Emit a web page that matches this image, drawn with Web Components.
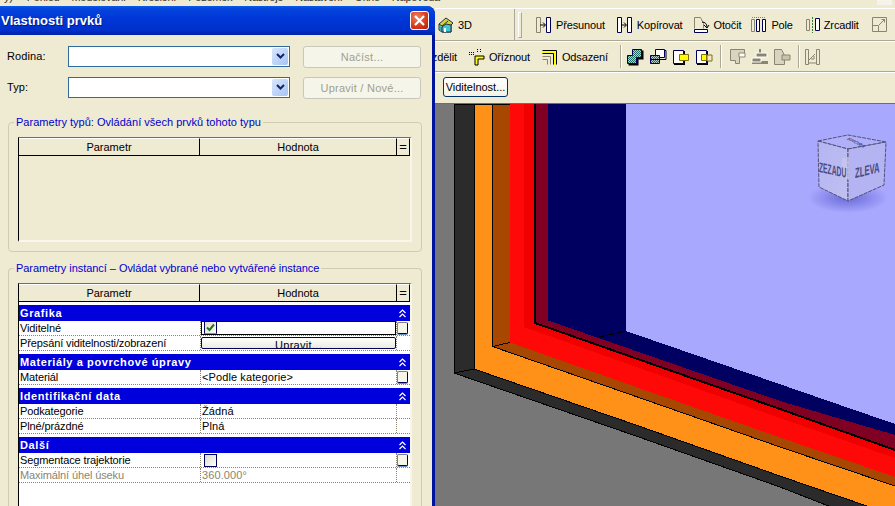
<!DOCTYPE html>
<html lang="cs">
<head>
<meta charset="utf-8">
<title>Vlastnosti prvků</title>
<style>
html, body { margin: 0; height: 506px; overflow: hidden; background: #efead2; }
body { font: 11px "Liberation Sans", Arial, sans-serif; color: #000; }
</style>
</head>
<body>
<revit-app>
  <app-menu slot="menu"></app-menu>
  <props-dialog slot="dialog" heading="Vlastnosti prvků">
    <form-row label="Rodina:" action="Načíst..."></form-row>
    <form-row label="Typ:" action="Upravit / Nové..."></form-row>
    <group-box heading="Parametry typů: Ovládání všech prvků tohoto typu" kind="types"><prop-table empty></prop-table></group-box>
    <group-box heading="Parametry instancí – Ovládat vybrané nebo vytvářené instance" kind="instances">
      <prop-table>
        <prop-section heading="Grafika"></prop-section>
        <prop-row name="Viditelné" control="checked" side></prop-row>
        <prop-row name="Přepsání viditelnosti/zobrazení" control="button"></prop-row>
        <prop-section heading="Materiály a povrchové úpravy"></prop-section>
        <prop-row name="Materiál" value="<Podle kategorie>" side></prop-row>
        <prop-section heading="Identifikační data"></prop-section>
        <prop-row name="Podkategorie" value="Žádná"></prop-row>
        <prop-row name="Plné/prázdné" value="Plná"></prop-row>
        <prop-section heading="Další"></prop-section>
        <prop-row name="Segmentace trajektorie" control="check" side></prop-row>
        <prop-row name="Maximální úhel úseku" value="360.000°" muted></prop-row>
      </prop-table>
    </group-box>
  </props-dialog>
  <tool-bars slot="bars"></tool-bars>
  <view-port slot="view"><view-cube></view-cube></view-port>
</revit-app>

<script>
const TAN = "#8a8570";
const NAVY = "#00005a";
const dither = `<defs><pattern id="d" width="2" height="2" patternUnits="userSpaceOnUse"><rect width="2" height="2" fill="#b8d0c8"/><rect width="1" height="1" fill="#1f6a60"/><rect x="1" y="1" width="1" height="1" fill="#1f6a60"/></pattern></defs>`;
const icons = {
  house: `<path d="M1 7 8 1l7 5-2 2v7H4l-3-2z" fill="#d8d040" stroke="#203040"/><path d="M1 7l3 2 6-5" fill="none" stroke="#203040"/><path d="M2 9l2 1v5l-2-2z" fill="#30b0c0"/><path d="M4 10l4-3 5 1v7H4z" fill="#40c8d0" stroke="#203040"/><path d="M6 11h2v4H6z" fill="#fff"/>`,
  move: `<path d="M.5.5h4v15h-4z" fill="none" stroke="${TAN}"/><path d="M10.500.500h4v15h-4z" fill="#fff" stroke="${NAVY}"/><path d="M4 8h5M7 5.500 9.500 8 7 10.500" fill="none" stroke="#000"/>`,
  copy: `<path d="M.5.500h4v15h-4zM10.500.500h4v15h-4z" fill="#fff" stroke="${NAVY}"/><path d="M4 8h5M7 5.500 9.500 8 7 10.500" fill="none" stroke="#000"/>`,
  rotate: `<path d="M.5 11.500V.5h6l3 6v5" fill="none" stroke="${TAN}"/><path d="M8 5c3 0 5 2 5 5M10 8l3 3 2-3" fill="none" stroke="#000"/><path d="M.5 12.500h13v3H.5z" fill="#fff" stroke="${NAVY}"/>`,
  array: `<path d="M.5 2.500h3v12h-3z" fill="none" stroke="${TAN}"/><path d="M5.500 2.500h3v12h-3zM11.500 2.500h3v12h-3z" fill="#fff" stroke="${NAVY}"/><path d="M1 .5h13" stroke="${TAN}" stroke-dasharray="1 1"/>`,
  mirror: `<path d="M.5 2.500h3v11h-3z" fill="none" stroke="${TAN}"/><path d="M6.500 0v16" stroke="#3a7a30" stroke-dasharray="2 1"/><path d="M9.500 1.500h4v12h-4z" fill="#fff" stroke="${NAVY}"/>`,
  resize: `<path d="M.5.500h14v14H.5zM.5 8.500h6v6M7 8l6-6M9.500 2.500h3v3" fill="none" stroke="${TAN}"/>`,
  trim: `<path d="M0 5.500h6M0 3.500h6M8.500 0v4M11.500 0v4" stroke="#000" stroke-dasharray="1 1"/><path d="M6 7h9v3H9v6H6z" fill="#ffff00" stroke="#000"/>`,
  offset: `<path d="M.5 1.500h14v14M.5 4.500h11v11" fill="none" stroke="#000"/><path d="M0 3h13v13" fill="none" stroke="#ffff00" stroke-width="2"/><path d="M.5 7.500h8v8M.5 10.500h5v5" fill="none" stroke="${TAN}"/>`,
  joinA: `${dither}<path d="M6 1h10v9h-5v6H1V7h5z" fill="#000" transform="translate(.5 .5)"/><path d="M5.500.5h9v8h-5v6h-9v-8h5z" fill="url(#d)" stroke="${NAVY}"/>`,
  joinB: `${dither}<path d="M.5 6.500h9v8h-9z" fill="url(#d)" stroke="${NAVY}"/><path d="M6 1h10v9H1" fill="none" stroke="#000" transform="translate(0 .5)"/><path d="M5.500.5h9v8h-5v-2h-4z" fill="#fff" stroke="${NAVY}"/>`,
  cutA: `<path d="M1 2h11v14H1z" fill="#000"/><path d="M.5 1.500h10v13H.5z" fill="#fff" stroke="${NAVY}"/><path d="M6.500 5.500h9v6h-9z" fill="#ffff00" stroke="#807000"/>`,
  cutB: `<path d="M1 2h11v14H1z" fill="#000"/><path d="M.5 1.500h10v13H.5z" fill="#fff" stroke="${NAVY}"/><path d="M11 6h5v6h-5z" fill="#efead2" stroke="#807000"/><path d="M5.500 5.500h5v6h-5z" fill="#ffff00" stroke="#807000"/>`,
  greyA: `<path d="M.5.500h14v6h-5v8h-4v-3h-5z" fill="#d8d4c0" stroke="${TAN}"/><path d="M9 4h6v4H9z" fill="#fff" stroke="${TAN}"/>`,
  greyB: `<path d="M7 0h2v5H7zM0 12h16v3H0z" fill="${TAN}"/><path d="M4 4h11v4H4zM0 9h9v4H0z" fill="${TAN}" stroke="#fff"/>`,
  greyC: `<path d="M.5.500h7l3 6v9h-10z" fill="#d8d4c0" stroke="${TAN}"/><path d="M8 6h8v5H8z" fill="#c8c4b0" stroke="${TAN}"/>`,
  greyD: `<path d="M.5.500h3v15h-3zM11.500.500h3v15h-3z" fill="none" stroke="${TAN}"/><path d="M4 11l6-6M6 10h3v-3M4 14h7" fill="none" stroke="${TAN}"/>`
};

const esc = s => s.replace(/&/g, "&amp;").replace(/</g, "&lt;");

class RevitApp extends HTMLElement {
  constructor() {
    super();
    this.attachShadow({ mode: "open" });
    this.shadowRoot.innerHTML = `
    <style>
      :host { display: flex; flex-direction: column; width: 895px; height: 506px; overflow: hidden; }
      .work { display: flex; flex: 1; min-height: 0; }
      .right { flex: 1; min-width: 0; display: flex; flex-direction: column; }
      ::slotted([slot="view"]) { flex: 1; }
    </style>
    <slot name="menu"></slot>
    <div class="work">
      <slot name="dialog"></slot>
      <div class="right"><slot name="bars"></slot><slot name="view"></slot></div>
    </div>`;
  }
}

class AppMenu extends HTMLElement {
  constructor() {
    super();
    this.attachShadow({ mode: "open" });
    const items = ["Pohled", "Modelování", "Kreslení", "Pozemek", "Nástroje", "Nastavení", "Okno", "Nápověda"];
    this.shadowRoot.innerHTML = `
    <style>
      :host { display: flex; justify-content: space-between; height: 6px; overflow: hidden; }
      nav { display: flex; gap: 12px; margin: -9px 0 0 4px; line-height: 13px; color: #333; white-space: nowrap; letter-spacing: -.25px; }
      nav span:first-child { margin-right: 2px; }
      i { width: 15px; height: 5px; margin-right: 3px; background: #f6f4ea; }
    </style>
    <nav><span>y)</span>${items.map(i => `<span>${i}</span>`).join("")}</nav><i></i>`;
  }
}

class PropsDialog extends HTMLElement {
  constructor() {
    super();
    this.attachShadow({ mode: "open" });
    this.shadowRoot.innerHTML = `
    <style>
      :host { display: block; flex: none; width: 435px; height: 500px; box-sizing: border-box; position: relative; z-index: 2; overflow: hidden;
        border-radius: 0 8px 0 0; background: #00139c; }
      .title { height: 29px; display: flex; align-items: center; justify-content: space-between; padding: 0 6px 0 1px;
        background: linear-gradient(#0a5ae8 0, #0444dc 3px, #0037d8 12px, #0030cc 24px, #0022a8 29px); }
      .title b { color: #fff; font: bold 13px "Liberation Sans", Arial, sans-serif; text-shadow: 1px 1px 0 #001a80; }
      .close { width: 19px; height: 19px; box-sizing: border-box; border: 1px solid #fff; border-radius: 3px;
        background: radial-gradient(circle at 35% 30%, #f08060, #d83818 60%, #b02008); display: flex; }
      .close svg { margin: auto; }
      .body { height: 471px; margin-right: 3px; background: #efead2; overflow: hidden; padding-top: 11px; box-sizing: border-box; }
    </style>
    <div class="title">
      <b>${this.getAttribute("heading")}</b>
      <span class="close"><svg width="13" height="13" viewBox="0 0 13 13"><path d="M2 2l9 9M11 2l-9 9" stroke="#fff" stroke-width="2.200"/></svg></span>
    </div>
    <div class="body"><slot></slot></div>`;
  }
}

class FormRow extends HTMLElement {
  constructor() {
    super();
    this.attachShadow({ mode: "open" });
    this.shadowRoot.innerHTML = `
    <style>
      :host { display: grid; grid-template-columns: 61px 222px 118px; height: 31px; padding-left: 7px; font-size: 11px; letter-spacing: .1px; }
      label { line-height: 21px; }
      .combo { width: 222px; height: 21px; box-sizing: border-box; border: 1px solid #2f6a9c; background: #fff; display: flex; justify-content: flex-end; padding: 1px; }
      .arrow { width: 16px; background: linear-gradient(135deg, #d8e6fc, #a8c4f4); border-radius: 2px; display: flex; }
      .arrow svg { margin: auto; }
      .btn { margin-left: 13px; width: 118px; height: 22px; box-sizing: border-box; border: 1px solid #c9c7ba; border-radius: 3px; background: #f6f5ea; color: #a19f8e;
        text-align: center; line-height: 20px; letter-spacing: .25px; }
    </style>
    <label>${this.getAttribute("label")}</label>
    <div class="combo"><span class="arrow"><svg width="9" height="7" viewBox="0 0 9 7"><path d="M1 1l3.500 3.500L8 1" fill="none" stroke="#12246c" stroke-width="2"/></svg></span></div>
    <div class="btn">${this.getAttribute("action")}</div>`;
  }
}

class GroupBox extends HTMLElement {
  constructor() {
    super();
    this.attachShadow({ mode: "open" });
    this.shadowRoot.innerHTML = `
    <style>
      :host { display: block; margin: 0 10px 0 8px; position: relative; box-sizing: border-box; border: 1px solid #d0ccb4; border-radius: 4px; padding: 14px 9px 0; }
      :host([kind="types"]) { margin-top: 14px; height: 130px; }
      :host([kind="instances"]) { margin-top: 16px; height: 260px; border-bottom: 0; border-radius: 4px 4px 0 0; padding-top: 14px; }
      .legend { position: absolute; left: 5px; top: -7px; padding: 0 2px; background: #efead2; color: #0000d0; line-height: 13px; white-space: nowrap; letter-spacing: var(--ls, 0); }
      :host([kind="types"]) .legend { --ls: .02px; }
      :host([kind="instances"]) .legend { --ls: -.05px; }
    </style>
    <span class="legend">${this.getAttribute("heading")}</span>
    <slot></slot>`;
  }
}

class PropTable extends HTMLElement {
  constructor() {
    super();
    this.attachShadow({ mode: "open" });
    this.shadowRoot.innerHTML = `
    <style>
      :host { display: block; width: 394px; height: 105px; box-sizing: border-box; background: #fff; border-top: 1px solid #716f64; border-left: 1px solid #000; border-right: 2px solid #f8f6ea; }
      :host([empty]) { background: #efead2; border-bottom: 2px solid #f8f6ea; }
      :host(:not([empty])) { height: 240px; }
      .head { display: grid; grid-template-columns: 181px 197px 13px; height: 18px; box-sizing: border-box; border-bottom: 1px solid #000; background: #efead2; }
      .head span { text-align: center; line-height: 17px; border-right: 1px solid #000; border-top: 1px solid #fff; }
      .head span:last-child { width: 12px; font-size: 13px; line-height: 15px; }
    </style>
    <div class="head"><span>Parametr</span><span>Hodnota</span><span>=</span></div>
    <slot></slot>`;
  }
}

class PropSection extends HTMLElement {
  constructor() {
    super();
    this.attachShadow({ mode: "open" });
    this.shadowRoot.innerHTML = `
    <style>
      :host { display: flex; justify-content: space-between; align-items: center; height: 16px; margin-top: 3px; width: 391px; padding: 0 4px 0 1px; box-sizing: border-box; background: #0000dc; color: #fff; }
      b { font: bold 11px "Liberation Sans", Arial, sans-serif; letter-spacing: .6px; }
    </style>
    <b>${this.getAttribute("heading")}</b>
    <svg width="7" height="9" viewBox="0 0 7 9"><path d="M.5 4 3.500 1l3 3M.5 8l3-3 3 3" fill="none" stroke="#fff" stroke-width="1.200"/></svg>`;
  }
}

class PropRow extends HTMLElement {
  constructor() {
    super();
    this.attachShadow({ mode: "open" });
    const value = esc(this.getAttribute("value") || "");
    const control = this.getAttribute("control");
    let cell = `<span class="val">${value}</span>`;
    if (control === "checked") {
      cell = `<div class="field"><span class="check"><svg width="9" height="9" viewBox="0 0 9 9"><path d="M1 4.500 3.500 7 8 1.500" fill="none" stroke="#1a7a1a" stroke-width="2"/></svg></span></div>`;
    } else if (control === "check") {
      cell = `<span class="check solo"></span>`;
    } else if (control === "button") {
      cell = `<div class="upravit"><span>Upravit...</span></div>`;
    }
    this.shadowRoot.innerHTML = `
    <style>
      :host { display: grid; grid-template-columns: 181px 197px 13px; height: 15px; box-sizing: border-box; width: 391px; border-bottom: 1px dotted #8a8570; overflow: hidden; letter-spacing: -.12px; }
      :host([muted]) { color: #8a8570; }
      .name { padding-left: 1px; line-height: 14px; white-space: nowrap; }
      .cell { border-left: 1px dotted #8a8570; border-right: 1px dotted #8a8570; line-height: 14px; position: relative; }
      .val { padding-left: 1px; letter-spacing: .1px; }
      .field { height: 14px; box-sizing: border-box; border: 1px solid #000; padding-left: 2px; }
      .check { display: flex; align-items: center; justify-content: center; width: 13px; height: 13px; box-sizing: border-box; border: 1px solid #00005a; background: linear-gradient(135deg, #dcd8c8, #fff); border-bottom-color: #e87a10; margin-top: -1px; }
      .solo { margin: 1px 0 0 3px; border-bottom-color: #00005a; }
      .upravit { height: 12px; margin: 1px 0 0 0; box-sizing: border-box; border: 1px solid #00005a; border-radius: 2px; background: linear-gradient(#fff, #ecebe0); text-align: center; line-height: 14px; letter-spacing: .3px; overflow: hidden; }
      .side { height: 12px; width: 11px; margin-top: 1px; box-sizing: border-box; border: 1px solid #00005a; border-left-color: #808080; border-top-color: #808080; border-radius: 2px; background: #f6f5ea; box-shadow: 0 1px 0 #6a90c8; }
    </style>
    <span class="name">${this.getAttribute("name")}</span>
    <div class="cell">${cell}</div>
    ${this.hasAttribute("side") ? '<span class="side"></span>' : "<span></span>"}`;
  }
}

class ToolButton extends HTMLElement {
  constructor() {
    super();
    this.attachShadow({ mode: "open" });
    const label = this.getAttribute("label");
    this.shadowRoot.innerHTML = `
    <style>
      :host { display: inline-flex; align-items: center; gap: var(--gap, 4px); flex: none; white-space: nowrap; letter-spacing: -.15px; }
      svg { display: block; overflow: visible; }
    </style>
    <svg width="16" height="16" viewBox="0 0 16 16">${icons[this.getAttribute("icon")]}</svg>
    ${label ? `<span>${label}</span>` : ""}`;
  }
}

class ToolBars extends HTMLElement {
  constructor() {
    super();
    this.attachShadow({ mode: "open" });
    this.shadowRoot.innerHTML = `
    <style>
      :host { display: block; height: 98px; overflow: hidden; background: #efead2; }
      .cap { height: 2px; border-bottom: 1px solid #fff; }
      .row { display: flex; align-items: center; box-sizing: border-box; white-space: nowrap; }
      .one { height: 32px; border-bottom: 1px solid #aca899; box-shadow: 0 1px 0 #fff; }
      .two { height: 30px; border-bottom: 1px solid #aca899; box-shadow: 0 1px 0 #fff; margin-top: 1px; }
      .three { height: 32px; padding: 0 0 2px 8px; border-bottom: 1px solid #716f64; }
      .sep { flex: none; width: 1px; height: 23px; background: #aca899; border-right: 1px solid #fff; }
      .v3d { display: flex; align-items: center; height: 100%; width: 80px; box-sizing: border-box; padding-left: 3px; border-right: 1px solid #aca899; flex: none; }
      .grip { flex: none; width: 2px; height: 24px; border: 1px solid #aca899; border-left-color: #fff; border-top-color: #fff; margin: 0 14px 0 3px; }
      .vis { height: 20px; width: 65px; box-sizing: border-box; border: 1px solid #00306a; border-radius: 3px; background: linear-gradient(#fff, #f4f2e6); text-align: center; line-height: 18px; }
      .m { margin-left: var(--m); }
    </style>
    <div class="cap"></div>
    <div class="row one">
      <div class="v3d"><tool-button icon="house" label="3D"></tool-button></div>
      <span class="grip"></span>
      <tool-button icon="move" label="Přesunout"></tool-button>
      <tool-button class="m" style="--m:12px" icon="copy" label="Kopírovat"></tool-button>
      <tool-button class="m" style="--m:11px" icon="rotate" label="Otočit"></tool-button>
      <tool-button class="m" style="--m:10px" icon="array" label="Pole"></tool-button>
      <tool-button class="m" style="--m:13px;--gap:2px" icon="mirror" label="Zrcadlit"></tool-button>
      <tool-button class="m" style="--m:13px" icon="resize"></tool-button>
    </div>
    <div class="row two">
      <span style="margin-left:-17px;letter-spacing:-.1px">Rozdělit</span>
      <tool-button class="m" style="--m:12px" icon="trim" label="Oříznout"></tool-button>
      <tool-button class="m" style="--m:12px" icon="offset" label="Odsazení"></tool-button>
      <span class="sep m" style="--m:12px"></span>
      <tool-button class="m" style="--m:5px" icon="joinA"></tool-button>
      <tool-button class="m" style="--m:7px" icon="joinB"></tool-button>
      <tool-button class="m" style="--m:7px" icon="cutA"></tool-button>
      <tool-button class="m" style="--m:7px" icon="cutB"></tool-button>
      <span class="sep m" style="--m:8px"></span>
      <tool-button class="m" style="--m:8px" icon="greyA"></tool-button>
      <tool-button class="m" style="--m:6px" icon="greyB"></tool-button>
      <tool-button class="m" style="--m:6px" icon="greyC"></tool-button>
      <span class="sep m" style="--m:8px"></span>
      <tool-button class="m" style="--m:5px" icon="greyD"></tool-button>
    </div>
    <div class="row three"><div class="vis">Viditelnost...</div></div>`;
  }
}

class ViewPort extends HTMLElement {
  constructor() {
    super();
    this.attachShadow({ mode: "open" });
    // souřadnice ve viewBoxu odpovídají pixelům okna
    this.shadowRoot.innerHTML = `
    <style>
      :host { display: block; position: relative; overflow: hidden; background: #777; }
      svg { display: block; }
    </style>
    <svg width="460" height="402" viewBox="435 104 460 402" shape-rendering="crispEdges">
      <path d="M454 104H895V532L780 487 636 436 454 373Z" fill="#2b2b2b" stroke="#000"/>
      <path d="M474 104H895V516L867 506 780 476 636 425 474 369Z" fill="#ff9018" stroke="#000"/>
      <path d="M492.500 104H895V486L780 447 636 396.500 492.500 346.500Z" fill="#a84800" stroke="#000"/>
      <path d="M510 104H895V477L780 437.500 636 387 510 342.500Z" fill="#ff0808"/>
      <path d="M524 104H895V458L780 418 524 327Z" fill="#f00000"/>
      <path d="M536 104H895V450L780 410 536 323Z" fill="#800024"/>
      <path d="M535 104V323L780 409 895 450" fill="none" stroke="#000" stroke-width="2"/>
      <path d="M548 104H895V435L780 401 548 320.500Z" fill="#000060"/>
      <path d="M626 104H895V424L626 331Z" fill="#a8a8ff"/>
      <path d="M454 373 474 369M492.500 346.500 510 342.500M599 337 626 331" fill="none" stroke="#000"/>
    </svg>
    <slot></slot>`;
  }
}

class ViewCube extends HTMLElement {
  constructor() {
    super();
    this.attachShadow({ mode: "open" });
    this.shadowRoot.innerHTML = `
    <style>
      :host { display: block; position: absolute; right: 0; top: 26px; width: 90px; height: 90px; }
      svg { display: block; }
      text { font-family: "Liberation Sans", Arial, sans-serif; font-weight: bold; fill: #4a4a80; }
    </style>
    <svg width="90" height="90" viewBox="805 130 90 90">
      <defs>
        <radialGradient id="shade"><stop offset="0" stop-color="#6a6ad8"/><stop offset="1" stop-color="#a8a8ff"/></radialGradient>
        <linearGradient id="left" x1="0" y1="0" x2="1" y2="1"><stop offset="0" stop-color="#b4b4f4"/><stop offset="1" stop-color="#c0c0f0"/></linearGradient>
      </defs>
      <ellipse cx="848" cy="198" rx="40" ry="15" fill="url(#shade)"/>
      <path d="M818 141 848 135 886 142 848 149Z" fill="#b0b0f8" stroke="#505078" stroke-dasharray="4 1"/>
      <path d="M818 141 848 149 848 201 819 187Z" fill="url(#left)" stroke="#505078" stroke-dasharray="4 1"/>
      <path d="M848 149 886 142 884 185 848 201Z" fill="#b4b4f2" stroke="#505078" stroke-dasharray="4 1"/>
      <path d="M842 158h7v22l-7-3z" fill="#c8c8ee" opacity=".7"/>
      <text transform="matrix(.48 .1 0 1 819 172)" font-size="14">ZEZADU</text>
      <text transform="matrix(.55 -.13 0 1 855 178)" font-size="14">ZLEVA</text>
      <text transform="matrix(.6 .3 -.6 .3 846 139)" font-size="8">SHORA</text>
    </svg>`;
  }
}

customElements.define("revit-app", RevitApp);
customElements.define("app-menu", AppMenu);
customElements.define("props-dialog", PropsDialog);
customElements.define("form-row", FormRow);
customElements.define("group-box", GroupBox);
customElements.define("prop-table", PropTable);
customElements.define("prop-section", PropSection);
customElements.define("prop-row", PropRow);
customElements.define("tool-button", ToolButton);
customElements.define("tool-bars", ToolBars);
customElements.define("view-port", ViewPort);
customElements.define("view-cube", ViewCube);
</script>
</body>
</html>
